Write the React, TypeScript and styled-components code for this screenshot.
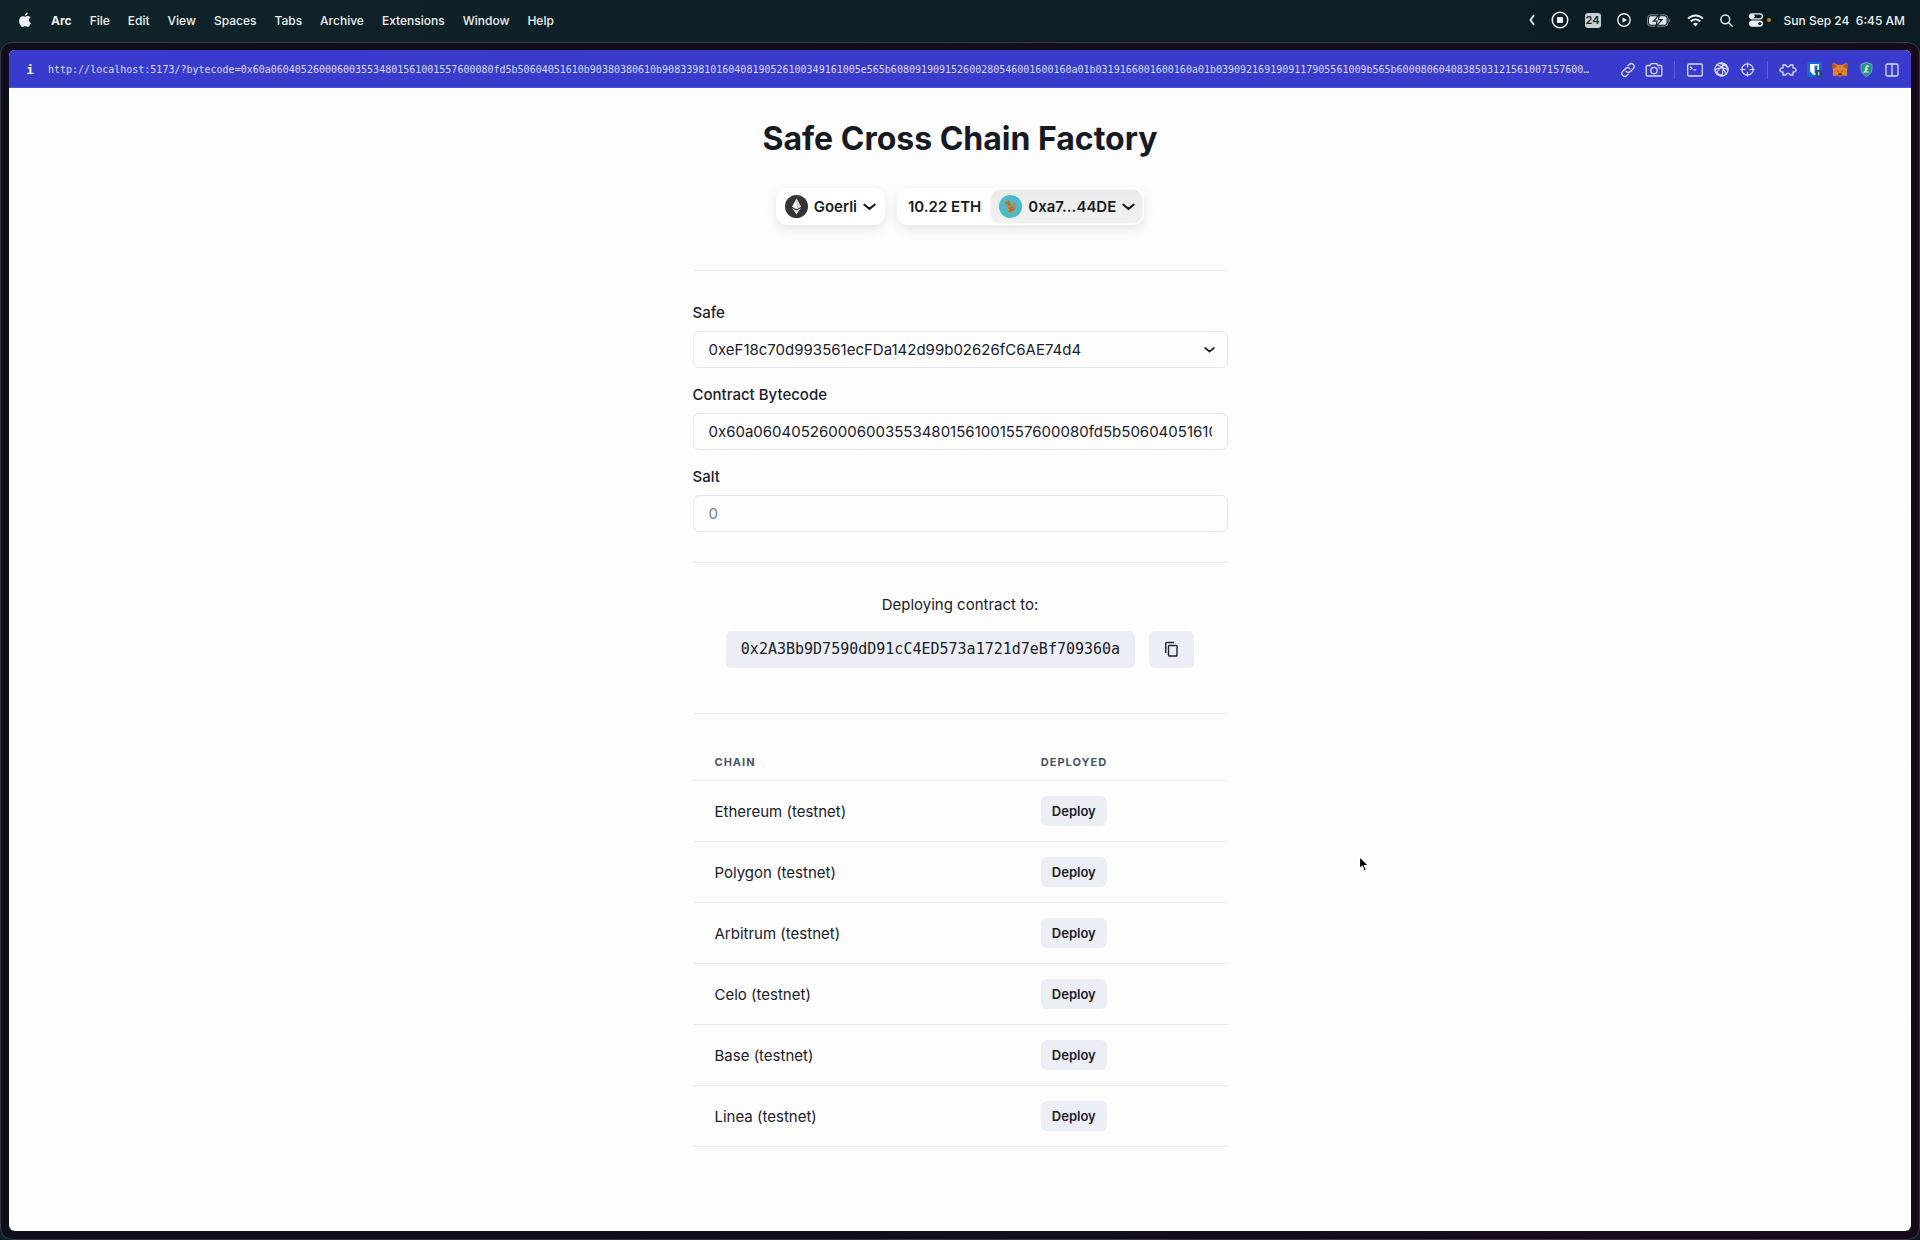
import React from "react";
import styled, { createGlobalStyle } from "styled-components";

const sans = `Inter, "Liberation Sans", sans-serif`;
const mono = `"DejaVu Sans Mono", "Liberation Mono", monospace`;

const bytecode =
  "0x60a060405260006003553480156100155760008" +
  "0fd5b50604051610b90380380610b908339810160408190526100349161005e565b" +
  "608091909152600280546001600160a01b0319166001600160a01b0390921691909117905561009b565b" +
  "6000806040838503121561007157600";

const GlobalStyle = createGlobalStyle`
  * { box-sizing: border-box; }
  body { margin: 0; background: #102227; font-family: ${sans}; color: #1a202c; }
  button, input, select { font: inherit; color: inherit; margin: 0; }
  button { border: 0; background: none; padding: 0; }
`;

const Desktop = styled.div`
  min-height: 100vh;
  display: flex;
  flex-direction: column;
  background: linear-gradient(90deg, #102329, #0b1d22);
`;

const MenuBar = styled.header`
  height: 42px;
  display: flex;
  align-items: center;
  justify-content: space-between;
  padding: 0 15px 2px 18px;
  color: #edf1f2;
  font-size: 12px;
  font-weight: 500;
`;

const MenuList = styled.nav`
  display: flex;
  align-items: center;
  gap: 18px;
`;

const MenuItem = styled.button<{ $bold?: boolean }>`
  font-weight: ${(p) => (p.$bold ? 700 : 500)};
`;

const StatusArea = styled.div`
  display: flex;
  align-items: center;
  gap: 13px;
`;

const StatusIconRow = styled.div`
  display: flex;
  align-items: center;
  gap: 16px;
  svg { display: block; }
`;

const DateBadge = styled.span`
  width: 16px;
  height: 15px;
  border-radius: 3px;
  background: #c9d0d2;
  color: #13262b;
  font-size: 11px;
  line-height: 15px;
  font-weight: 600;
  text-align: center;
`;

const Clock = styled.time`
  white-space: pre;
`;

const Window = styled.div`
  flex: 1;
  display: flex;
  flex-direction: column;
  padding: 7px 8px 8px;
  border: 1px solid #383b48;
  border-radius: 12px;
  background: linear-gradient(90deg, #0e0e1c, #170b1b);
`;

const Viewport = styled.div`
  flex: 1;
  display: flex;
  flex-direction: column;
  border-radius: 6px;
  overflow: hidden;
  background: #fdfdfe;
`;

const UrlBar = styled.div`
  height: 38px;
  display: flex;
  align-items: center;
  padding: 2px 10px 0 17px;
  color: #d9dcff;
  background: #383bcc;
  border-bottom: 1px solid #4f4ed4;
`;

const InfoButton = styled.button`
  width: 8px;
  color: #f2f3ff;
  font: 700 12px ${mono};
`;

const UrlText = styled.a`
  flex: 1;
  min-width: 0;
  margin: 0 16px 0 14px;
  overflow: hidden;
  text-overflow: ellipsis;
  white-space: nowrap;
  color: inherit;
  text-decoration: none;
  font: 10px ${mono};
`;

const ToolGroup = styled.div`
  display: flex;
  align-items: center;
  gap: 8px;
`;

const ToolButton = styled.button`
  width: 18px;
  height: 18px;
  display: grid;
  place-items: center;
`;

const ToolDivider = styled.span`
  width: 1px;
  height: 18px;
  margin: 0 11px;
  background: #5a5de0;
`;

const Page = styled.main`
  width: 100%;
  max-width: 535px;
  margin: 0 auto;
  padding: 32px 0 80px;
`;

const Title = styled.h1`
  margin: 0;
  line-height: 38px;
  text-align: center;
  font-size: 32px;
  font-weight: 700;
  white-space: nowrap;
  color: #171923;
`;

const WalletRow = styled.div`
  display: flex;
  justify-content: center;
  gap: 12px;
  margin-top: 30px;
  font-size: 15px;
  font-weight: 600;
  color: #1a1d20;
`;

const WalletCard = styled.div`
  display: flex;
  align-items: center;
  height: 37px;
  padding-right: 1px;
  border-radius: 11px;
  background: #fff;
  box-shadow: 0 4px 12px rgba(0, 0, 0, 0.1);
`;

const WalletButton = styled.button<{ $filled?: boolean }>`
  display: flex;
  align-items: center;
  gap: 6px;
  height: 35px;
  padding: 0 7px 0 8px;
  border-radius: 10px;
  background: ${(p) => (p.$filled ? "linear-gradient(#ebebec, #f1f1f2)" : "transparent")};
  border: 1px solid ${(p) => (p.$filled ? "#f8f8f8" : "transparent")};
  svg { display: block; }
`;

const Balance = styled.span`
  padding: 0 9px 0 11px;
`;

const Rule = styled.hr<{ $top: number; $bottom: number }>`
  height: 1px;
  border: 0;
  background: #e9edf1;
  margin: ${(p) => p.$top}px 0 ${(p) => p.$bottom}px;
`;

const Form = styled.form`
  display: grid;
  gap: 16px;
`;

const Field = styled.div`
  display: grid;
  gap: 8px;
`;

const Label = styled.label`
  font-size: 15px;
  line-height: 21px;
  font-weight: 500;
`;

const SelectWrap = styled.div`
  display: grid;
  align-items: center;
  > * { grid-area: 1 / 1; }
  svg {
    justify-self: end;
    margin-right: 13px;
    pointer-events: none;
  }
`;

const control = `
  width: 100%;
  height: 37px;
  padding: 0 15px;
  border: 1px solid #e2e8f0;
  border-radius: 6px;
  background: transparent;
  font-size: 15px;
  outline: none;
`;

const Input = styled.input`
  ${control}
  &::placeholder { color: #718096; opacity: 1; }
`;

const Select = styled.select`
  ${control}
  appearance: none;
`;

const DeployTarget = styled.section`
  display: grid;
  justify-items: center;
  gap: 15px;
`;

const DeployText = styled.p`
  margin: 0;
  font-size: 15px;
  line-height: 22px;
`;

const AddressRow = styled.div`
  display: flex;
  gap: 14px;
`;

const Address = styled.code`
  height: 37px;
  padding: 0 15px;
  border-radius: 6px;
  background: #ebeef5;
  font: 15px/37px ${mono};
`;

const CopyButton = styled.button`
  width: 45px;
  height: 37px;
  display: grid;
  place-items: center;
  border-radius: 6px;
  background: #ebeef5;
`;

const ChainTable = styled.table`
  width: 100%;
  border-collapse: separate;
  border-spacing: 0;
  table-layout: fixed;
  text-align: left;
  font-size: 15px;
`;

const HeadCell = styled.th<{ $wide?: boolean }>`
  width: ${(p) => (p.$wide ? "61%" : "39%")};
  height: 38px;
  padding: 0 22px;
  border-bottom: 1px solid #e9eef2;
  font-size: 11px;
  font-weight: 700;
  letter-spacing: 1px;
  text-transform: uppercase;
  color: #4a5568;
`;

const Cell = styled.td`
  height: 61px;
  padding: 0 22px;
  border-bottom: 1px solid #e9edf0;
`;

const DeployButton = styled.button`
  display: block;
  height: 30px;
  padding: 0 11px;
  border-radius: 6px;
  background: #ebeef5;
  font-size: 13px;
  font-weight: 600;
`;

const Pointer = styled.svg`
  position: absolute;
  left: 1358px;
  top: 855px;
  pointer-events: none;
`;

const Line = ({ w = 16, h = 16, box = "0 0 16 16", children }: {
  w?: number; h?: number; box?: string; children: React.ReactNode;
}) => (
  <svg width={w} height={h} viewBox={box} fill="none" stroke="currentColor" strokeWidth="1.3"
    strokeLinecap="round" strokeLinejoin="round" aria-hidden="true">{children}</svg>
);

const AppleIcon = () => (
  <svg width="15" height="16" viewBox="0 0 15 16" fill="currentColor" aria-hidden="true">
    <path d="M9.700 0.400c.1 1.700-1.300 3.200-2.800 3.100C6.700 2 8.200.5 9.700.4zM7.200 4.700c.6 0 1.500-.8 2.800-.7 1 .1 2 .5 2.600 1.400-2.300 1.400-1.900 4.600.4 5.600-.5 1.500-1.800 3.900-3.200 3.900-1 0-1.300-.6-2.500-.6s-1.600.6-2.500.6C3.100 15 1.100 11.800 1.100 8.900c0-2.900 1.800-4.700 3.600-4.700 1.100 0 1.900.5 2.500.5z" />
  </svg>
);

const Chevron = ({ w = 13 }: { w?: number }) => (
  <svg width={w} height="8" viewBox="0 0 14 8" fill="none" stroke="currentColor" strokeWidth="2.200"
    strokeLinecap="round" strokeLinejoin="round" aria-hidden="true"><path d="M1.500 1.500 7 6l5.500-4.500" /></svg>
);

const EthIcon = () => (
  <svg width="23" height="23" viewBox="0 0 23 23" aria-hidden="true">
    <circle cx="11.500" cy="11.500" r="11.500" fill="#333438" />
    <path d="M11.500 3.500 7 11.700l4.500 2.600 4.500-2.600z" fill="#f3f3f3" />
    <path d="M11.500 3.500v10.800l4.500-2.600z" fill="#d3d3d6" />
    <path d="M7 12.900l4.500 6.400 4.500-6.400-4.500 2.500z" fill="#ececec" />
  </svg>
);

const AvatarIcon = () => (
  <svg width="23" height="23" viewBox="0 0 23 23" aria-hidden="true">
    <circle cx="11.500" cy="11.500" r="11.500" fill="#4fb9cb" />
    <path d="M6 7.500c.5-2 4.500-2.800 5.500-.8.600 1.300.2 2.300 1.200 3 1.400.5 2.300-.6 2.300-2.200l1.600-.3c.5 2.800.3 6.500-1.300 9.300-1.900 2.200-5 2-6.300.2-.9-1.400.3-3-.2-4.300C8.200 11 5.600 9.900 6 7.500z" fill="#b08a4e" />
    <path d="M7 7.300l3.500 3M9 6.500l2 3M10 13.500l4-1M10.500 16l4-2" stroke="#80603a" strokeWidth=".9" />
  </svg>
);

const menus = ["File", "Edit", "View", "Spaces", "Tabs", "Archive", "Extensions", "Window", "Help"];
const chains = ["Ethereum", "Polygon", "Arbitrum", "Celo", "Base", "Linea"];

const StatusIcons = () => (
  <StatusIconRow>
    <svg width="6" height="12" viewBox="0 0 6 12" fill="none" stroke="currentColor" strokeWidth="1.800" aria-hidden="true"><path d="M5 1 1.500 6 5 11" /></svg>
    <svg width="18" height="18" viewBox="0 0 18 18" fill="none" stroke="currentColor" strokeWidth="1.500" aria-hidden="true">
      <circle cx="9" cy="9" r="7.800" /><rect x="6" y="6" width="6" height="6" rx="1" fill="currentColor" stroke="none" />
    </svg>
    <DateBadge>24</DateBadge>
    <svg width="14" height="14" viewBox="0 0 14 14" fill="none" stroke="currentColor" strokeWidth="1.400" aria-hidden="true">
      <circle cx="7" cy="7" r="6.200" /><path d="M5.500 4.300v5.400L10 7z" fill="currentColor" stroke="none" />
    </svg>
    <svg width="24" height="13" viewBox="0 0 24 13" aria-hidden="true">
      <rect x=".5" y=".8" width="20.500" height="11.400" rx="3.500" fill="none" stroke="#7f8b8f" />
      <rect x="2" y="2.300" width="17.500" height="8.400" rx="2" fill="#dfe4e5" />
      <path d="M22.300 4.800v3.400c1.300-.6 1.300-2.800 0-3.400z" fill="#7f8b8f" />
      <path d="M12.500.5 6.500 7.200h3.600L9 12.500l6-6.800h-3.600z" fill="#edf1f2" stroke="#102227" strokeWidth="1.200" />
    </svg>
    <svg width="17" height="13" viewBox="0 0 17 13" fill="none" stroke="currentColor" strokeWidth="1.900" aria-hidden="true">
      <path d="M1 4.700c4.300-4.300 10.700-4.300 15 0M3.700 7.500c2.800-2.700 6.800-2.700 9.600 0" />
      <path d="M8.500 12.500 6 9.800c1.500-1.300 3.500-1.300 5 0z" fill="currentColor" stroke="none" />
    </svg>
    <svg width="13" height="13" viewBox="0 0 13 13" fill="none" stroke="currentColor" strokeWidth="1.500" strokeLinecap="round" aria-hidden="true">
      <circle cx="5.300" cy="5.300" r="4.400" /><path d="m8.700 8.700 3.500 3.500" />
    </svg>
    <svg width="22" height="14" viewBox="0 0 22 14" aria-hidden="true">
      <rect x=".6" y=".8" width="12.800" height="5" rx="2.500" fill="none" stroke="#edf1f2" strokeWidth="1.300" />
      <circle cx="3.300" cy="3.300" r="2.400" fill="#edf1f2" />
      <rect x="0" y="7.500" width="14" height="6.200" rx="3.100" fill="#edf1f2" />
      <circle cx="10.800" cy="10.600" r="1.700" fill="#102227" />
      <circle cx="20" cy="7" r="2" fill="#c98325" />
    </svg>
  </StatusIconRow>
);

export default function App() {
  return (
    <Desktop>
      <GlobalStyle />
      <MenuBar>
        <MenuList aria-label="Menu bar">
          <AppleIcon />
          <MenuItem $bold>Arc</MenuItem>
          {menus.map((m) => <MenuItem key={m}>{m}</MenuItem>)}
        </MenuList>
        <StatusArea>
          <StatusIcons />
          <Clock>{"Sun Sep 24  6:45 AM"}</Clock>
        </StatusArea>
      </MenuBar>
      <Window>
        <Viewport>
          <UrlBar>
            <InfoButton>i</InfoButton>
            <UrlText href="#">{`http://localhost:5173/?bytecode=${bytecode}…`}</UrlText>
            <ToolGroup>
              <ToolButton aria-label="Copy link">
                <Line><path d="M6 9.200a2.900 2.900 0 0 0 4.400.3l2.900-2.900a2.900 2.900 0 0 0-4.100-4.100L7.800 3.900M10 6.800a2.900 2.900 0 0 0-4.400-.3L2.700 9.400a2.900 2.900 0 0 0 4.100 4.100l1.400-1.400" /></Line>
              </ToolButton>
              <ToolButton aria-label="Capture">
                <Line w={18} box="0 0 18 16"><path d="M2.500 3.500H5l1.300-1.800h5.400L13 3.500h2.500c.8 0 1.300.5 1.300 1.300v7.900c0 .8-.5 1.300-1.300 1.300h-13c-.8 0-1.300-.5-1.300-1.300V4.800c0-.8.5-1.300 1.300-1.300z" /><circle cx="9" cy="8.600" r="3.200" /><path d="M14 6h.2" /></Line>
              </ToolButton>
            </ToolGroup>
            <ToolDivider />
            <ToolGroup>
              <ToolButton aria-label="Console">
                <Line w={16} h={14} box="0 0 16 14"><rect x=".7" y="1" width="14.600" height="12" rx="1.200" /><path d="m3.300 4 1.700 1.300-1.700 1.300M6.800 6.800h2" /></Line>
              </ToolButton>
              <ToolButton aria-label="Network">
                <Line w={15} h={15}><circle cx="8" cy="8" r="7" /><path d="M3 3c3 .5 8 4 10 10M13 3C9 3 4 7 3 13M8 1c2 3 2.500 10 0 14M1 8c4-2 10-2 14 0M5.500 1.500c4 0 8 3 9.300 5M1.300 9.500c1.500 2.500 5.500 5 9.500 5" /></Line>
              </ToolButton>
              <ToolButton aria-label="Inspect">
                <Line w={15} h={15}><circle cx="8" cy="8" r="6" /><path d="M8 .8v4.500M8 10.700v4.500M.8 8h4.500M10.700 8h4.500" /></Line>
              </ToolButton>
            </ToolGroup>
            <ToolDivider />
            <ToolGroup>
              <ToolButton aria-label="Extensions">
                <Line w={18} h={14} box="0 0 18 14"><path d="M4 2h2.800c.3 2.300 4.100 2.300 4.400 0H14v3c4-.6 4 4.600 0 4v3h-2.800c-.3-2.300-4.100-2.300-4.400 0H4V9C0 9.600 0 4.400 4 5z" /></Line>
              </ToolButton>
              <ToolButton aria-label="Bitwarden">
                <svg width="15" height="15" viewBox="0 0 15 15"><rect width="15" height="15" rx="2" fill="#1767d8" /><path d="M3 2h9v5.500c0 2.800-2 4.500-4.500 5.700C5 12 3 10.300 3 7.500z" fill="#fff" /><path d="M7.500 3.500h3v4c0 1.700-1.200 2.900-3 4z" fill="#1767d8" /><rect x="8.500" y="8" width="6.500" height="7" rx="1" fill="#254e70" /><path d="M11.700 9.700v3.800" stroke="#cfe" /></svg>
              </ToolButton>
              <ToolButton aria-label="MetaMask">
                <svg width="16" height="15" viewBox="0 0 16 15"><path d="M.8.5 6.500 3h3L15.200.5l.5 5-.9 3.500.6 3-1 2.300-3.200-.9-1.500 1.100H6.300l-1.500-1.100-3.200.9-1-2.300.6-3L.3 5.500z" fill="#e8832c" /><path d="M.8.5 5 4.500.8 7 .3 5.500zM15.200.5 11 4.500 15.200 7l.5-1.500z" fill="#a8542a" /><path d="m4 8 2.500 1-.3 1zM12 8 9.500 9l.3 1z" fill="#27304a" /><path d="m6.500 11.500 1.500-.6 1.500.6.400 1.700H6.100z" fill="#2f2526" /></svg>
              </ToolButton>
              <ToolButton aria-label="Shield">
                <svg width="13" height="15" viewBox="0 0 13 15"><path d="M6.500.5 12 2.300v5c0 3.300-2.300 5.700-5.500 7.200C3.300 13 1 10.600 1 7.300v-5z" fill="#20947d" stroke="#8bc9bd" strokeWidth=".7" /><path d="M8.800 4.500c-1.500-1.200-3-.3-2.700 1.300.2 1.500.2 3-1.600 4.200h4.200M4.800 7.200h3" fill="none" stroke="#fff" strokeWidth="1.200" /></svg>
              </ToolButton>
              <ToolButton aria-label="Split view">
                <Line w={14} h={14} box="0 0 14 14"><rect x="1" y="1" width="12" height="12" rx="1.500" /><path d="M7 1v12" /></Line>
              </ToolButton>
            </ToolGroup>
          </UrlBar>
          <Page>
            <Title>Safe Cross Chain Factory</Title>
            <WalletRow>
              <WalletCard>
                <WalletButton><EthIcon />Goerli<Chevron /></WalletButton>
              </WalletCard>
              <WalletCard>
                <Balance>10.22 ETH</Balance>
                <WalletButton $filled><AvatarIcon />0xa7...44DE<Chevron /></WalletButton>
              </WalletCard>
            </WalletRow>
            <Rule $top={45} $bottom={31} />
            <Form>
              <Field>
                <Label htmlFor="safe">Safe</Label>
                <SelectWrap>
                  <Select id="safe"><option>0xeF18c70d993561ecFDa142d99b02626fC6AE74d4</option></Select>
                  <Chevron w={11} />
                </SelectWrap>
              </Field>
              <Field>
                <Label htmlFor="bytecode">Contract Bytecode</Label>
                <Input id="bytecode" defaultValue={bytecode} />
              </Field>
              <Field>
                <Label htmlFor="salt">Salt</Label>
                <Input id="salt" placeholder="0" />
              </Field>
            </Form>
            <Rule $top={30} $bottom={31} />
            <DeployTarget>
              <DeployText>Deploying contract to:</DeployText>
              <AddressRow>
                <Address>0x2A3Bb9D7590dD91cC4ED573a1721d7eBf709360a</Address>
                <CopyButton aria-label="Copy address">
                  <svg width="15" height="17" viewBox="0 0 15 17" fill="none" stroke="#1f2530" strokeWidth="1.400" aria-hidden="true"><path d="M1.700 12V2.500c0-.6.4-1 1-1H10" /><rect x="4.500" y="4.500" width="8.500" height="10.500" rx=".8" /></svg>
                </CopyButton>
              </AddressRow>
            </DeployTarget>
            <Rule $top={45} $bottom={29} />
            <ChainTable>
              <thead>
                <tr><HeadCell $wide scope="col">Chain</HeadCell><HeadCell scope="col">Deployed</HeadCell></tr>
              </thead>
              <tbody>
                {chains.map((c) => (
                  <tr key={c}>
                    <Cell>{c} (testnet)</Cell>
                    <Cell><DeployButton>Deploy</DeployButton></Cell>
                  </tr>
                ))}
              </tbody>
            </ChainTable>
          </Page>
        </Viewport>
      </Window>
      <Pointer width="13" height="19" viewBox="0 0 13 19" aria-hidden="true">
        <path d="M1.500 1.500v12.500l2.800-2.600 2 4.800 2.200-.9-2-4.700h4z" fill="#000" stroke="#fff" strokeWidth="1.200" />
      </Pointer>
    </Desktop>
  );
}
